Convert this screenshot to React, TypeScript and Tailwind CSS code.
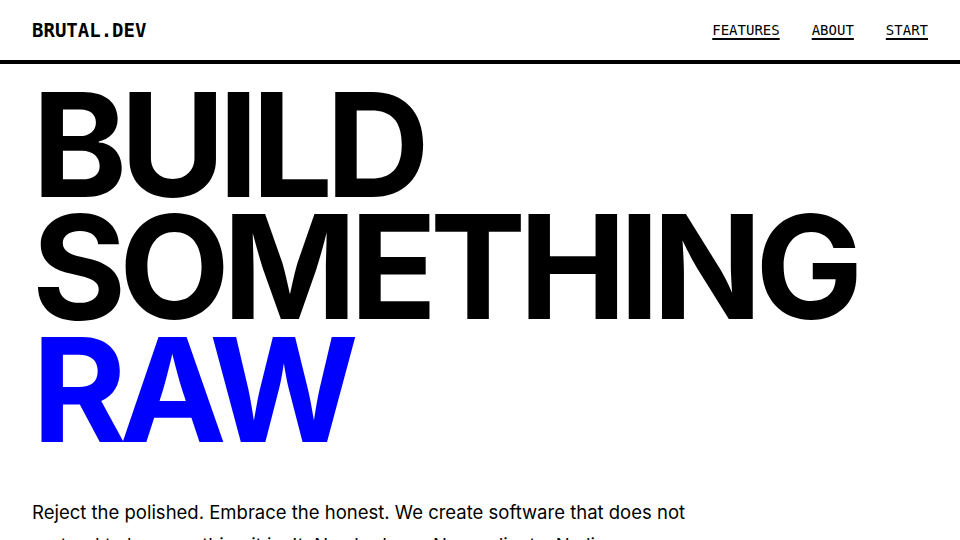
import React from 'react';

const navItems = ['FEATURES', 'ABOUT', 'START'];

export default function App() {
  return (
    <div className="min-h-screen bg-white text-black font-['Inter',sans-serif]">
      {/* Header */}
      <header className="h-16 flex items-center justify-between px-8 border-b-4 border-black">
        <div className="font-['DejaVu_Sans_Mono',monospace] font-bold text-[19px] leading-none">
          BRUTAL.DEV
        </div>
        <nav className="flex items-center gap-8 font-['DejaVu_Sans_Mono',monospace] text-sm">
          {navItems.map((item) => (
            <a
              key={item}
              href="#"
              className="underline decoration-[1.5px] underline-offset-[3px] leading-none"
            >
              {item}
            </a>
          ))}
        </nav>
      </header>

      {/* Hero */}
      <section className="px-8 pt-5">
        <h1 className="font-bold text-[144px] leading-[0.85] tracking-[-0.05em]">
          BUILD
          <br />
          SOMETHING
          <br />
          <span className="text-[#0000ff]">RAW</span>
        </h1>
        <p className="mt-[45px] max-w-2xl text-[18.5px] leading-[1.75]">
          Reject the polished. Embrace the honest. We create software that does not pretend to be
          something it isn't. No shadows. No gradients. No lies.
        </p>
      </section>
    </div>
  );
}
